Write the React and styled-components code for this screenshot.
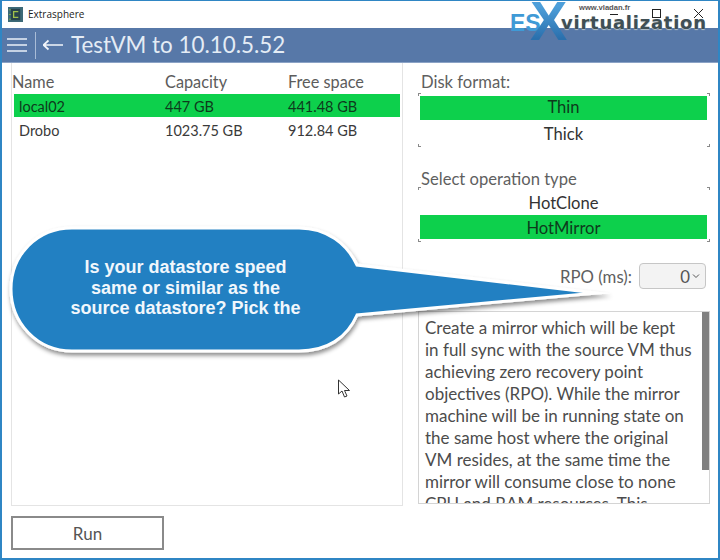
import React from 'react';
import styled, { createGlobalStyle } from 'styled-components';

const Global = createGlobalStyle`
  html, body { margin: 0; padding: 0; background: #fff; }
  * { box-sizing: border-box; }
`;

const Frame = styled.div`
  position: relative;
  width: 720px;
  height: 560px;
  overflow: hidden;
  background: #fff;
  border: 2px solid #2f86c4;
  border-top-width: 1px;
  display: flex;
  flex-direction: column;
  font-family: Lato, "Liberation Sans", sans-serif;
`;

const TitleBar = styled.div`
  height: 27px;
  flex: none;
  display: flex;
  align-items: center;
  gap: 5px;
  padding: 0 0 1px 6px;
  font: 10px "Open Sans", "Liberation Sans", sans-serif;
  color: #1c1c1c;
`;

const AppIcon = styled.svg`
  width: 15px;
  height: 15px;
  flex: none;
`;

const Header = styled.div`
  height: 35px;
  flex: none;
  background: #5778a8;
  border-bottom: 1px solid #8ba3c6;
  display: flex;
  align-items: center;
  color: #e4ecf5;
  padding-left: 5px;
`;

const Divider = styled.div`
  width: 1px;
  height: 27px;
  background: #a9bcd7;
  margin: 0 7px;
`;

const HeaderTitle = styled.div`
  font-size: 22.4px;
  line-height: 34px;
  margin-left: 7px;
  white-space: nowrap;
`;

const Content = styled.div`
  flex: none;
  height: 443px;
  display: grid;
  grid-template-columns: 392px 292px;
  column-gap: 15px;
  padding: 0 0 0 9px;
`;

const ListPanel = styled.div`
  border-left: 1px solid #e4e4e4;
  border-bottom: 1px solid #e4e4e4;
  border-right: 1px solid #e4e4e4;
  display: flex;
  flex-direction: column;
  height: 443px;
`;

const ListHead = styled.div`
  display: grid;
  grid-template-columns: 153px 123px 1fr;
  height: 31px;
  padding: 9px 0 0 0;
  font-size: 16.3px;
  line-height: 20px;
  color: #5c5c5c;
`;

const ListRow = styled.div`
  display: grid;
  grid-template-columns: 146px 123px 1fr;
  height: ${p => (p.$active ? 23 : 24)}px;
  margin: 0 2px 0 2px;
  padding: 2px 0 0 5px;
  align-items: center;
  font-size: 14.5px;
  color: ${p => (p.$active ? '#0d3a1c' : '#3a3a3a')};
  background: ${p => (p.$active ? '#0dd04c' : 'transparent')};
`;

const Side = styled.div`
  display: flex;
  flex-direction: column;
  height: 443px;
  position: relative;
`;

const Label = styled.div`
  font-size: 16.6px;
  line-height: 20px;
  color: #5f5f5f;
  padding-left: 3px;
  margin-top: ${p => p.$top || 0}px;
`;

const Group = styled.div`
  position: relative;
  margin-top: ${p => p.$top || 0}px;
  padding: 3px 3px 3px 2px;
  width: 292px;
  display: flex;
  flex-direction: column;
`;

const Corner = styled.i`
  position: absolute;
  width: 3px;
  height: 3px;
  border: 0 solid #8a8a8a;
  ${p => (p.$bottom ? 'bottom: 0; border-bottom-width: 1px;' : 'top: 0; border-top-width: 1px;')}
  ${p => (p.$right ? 'right: 0; border-right-width: 1px;' : 'left: 0; border-left-width: 1px;')}
`;

const Choice = styled.div`
  height: ${p => p.$h || 24}px;
  display: flex;
  align-items: center;
  justify-content: center;
  padding-top: ${p => p.$down || 0}px;
  padding-bottom: ${p => p.$up || 0}px;
  font-size: 16.6px;
  color: ${p => (p.$active ? '#0d3a1c' : '#333')};
  background: ${p => (p.$active ? '#0dd04c' : 'transparent')};
`;

const RpoRow = styled.div`
  display: flex;
  justify-content: flex-end;
  align-items: center;
  gap: 7px;
  height: 26px;
  margin-top: 21px;
  padding-right: 4px;
  font-size: 16.8px;
  color: #5f5f5f;
`;

const RpoSelect = styled.div`
  width: 67px;
  height: 26px;
  border: 1px solid #c6c6c6;
  border-radius: 4px;
  background: #f3f3f3;
  display: flex;
  align-items: center;
  justify-content: flex-end;
  gap: 2px;
  padding-right: 5px;
  font-size: 16.8px;
  color: #555;
`;

const DescBox = styled.div`
  position: relative;
  margin-top: 22px;
  width: 292px;
  height: 193px;
  border: 1px solid #d4d4d4;
  overflow: hidden;
  padding: 5px 0 0 6px;
  font-size: 17px;
  line-height: 22px;
  color: #4c4c4c;
`;

const Line = styled.div`
  white-space: nowrap;
`;

const Thumb = styled.div`
  position: absolute;
  right: 0;
  top: 0;
  width: 7px;
  height: 158px;
  background: #808080;
`;

const Footer = styled.div`
  flex: 1;
  padding: 10px 0 0 9px;
`;

const RunButton = styled.div`
  width: 153px;
  height: 34px;
  border: 2px solid #8a8a8a;
  display: flex;
  align-items: center;
  justify-content: center;
  font-size: 17px;
  color: #555;
`;

/* things lying over the window */
const Logo = styled.div`
  position: absolute;
  left: 506px;
  top: -1px;
  width: 208px;
  height: 42px;
  pointer-events: none;
`;
const LogoEs = styled.span`
  position: absolute;
  left: 2px;
  top: 10px;
  font: bold 23px/26px "Liberation Sans", sans-serif;
  color: #3f9ad6;
`;
const LogoX = styled.span`
  position: absolute;
  left: 22px;
  top: -4px;
  font: bold 56px/50px "Liberation Sans", sans-serif;
  background: linear-gradient(180deg, #4d9fda 20%, #2a70ad 85%);
  -webkit-background-clip: text;
  background-clip: text;
  color: transparent;
`;
const LogoWord = styled.span`
  position: absolute;
  left: 53px;
  top: 11px;
  font: bold 18px/24px "DejaVu Sans", sans-serif;
  letter-spacing: 0.75px;
  color: #3f4f55;
  text-shadow: 0 1px 1px #b8c4c8;
  white-space: nowrap;
`;
const LogoUrl = styled.span`
  position: absolute;
  left: 71px;
  top: 3px;
  font: bold 7.6px/10px "Liberation Sans", sans-serif;
  color: #555;
  white-space: nowrap;
`;

const Controls = styled.svg`
  position: absolute;
  left: 606px;
  top: 4px;
  width: 106px;
  height: 18px;
  pointer-events: none;
`;

const BubbleWrap = styled.div`
  position: absolute;
  left: 0;
  top: 217px;
  width: 620px;
  height: 150px;
`;
const BubbleSvg = styled.svg`
  position: absolute;
  inset: 0;
  width: 620px;
  height: 150px;
  overflow: visible;
`;
const BubbleText = styled.div`
  position: absolute;
  left: 21px;
  top: 39px;
  width: 325px;
  text-align: center;
  font: bold 18px/20.5px "Liberation Sans", sans-serif;
  color: #f1f7fc;
`;

const Pointer = styled.svg`
  position: absolute;
  left: 335px;
  top: 378px;
  width: 14px;
  height: 20px;
`;

const Burger = styled.svg`
  width: 21px;
  height: 16px;
  flex: none;
`;
const Back = styled.svg`
  width: 21px;
  height: 12px;
  flex: none;
`;
const Chevron = styled.svg`
  width: 8px;
  height: 6px;
  flex: none;
`;

const rows = [
  ['local02', '447 GB', '441.48 GB', true],
  ['Drobo', '1023.75 GB', '912.84 GB', false],
];

const desc = [
  'Create a mirror which will be kept',
  'in full sync with the source VM thus',
  'achieving zero recovery point',
  'objectives (RPO). While the mirror',
  'machine will be in running state on',
  'the same host where the original',
  'VM resides, at the same time the',
  'mirror will consume close to none',
  'CPU and RAM resources. This',
];

const Corners = () => (
  <>
    <Corner />
    <Corner $right />
    <Corner $bottom />
    <Corner $bottom $right />
  </>
);

export default function App() {
  return (
    <Frame>
      <Global />
      <TitleBar>
        <AppIcon viewBox="0 0 16 16">
          <rect width="16" height="16" fill="#3d6a78" />
          <rect x="3" y="2" width="10" height="12" fill="#27424c" />
          <path d="M11 5H6v6h5" fill="none" stroke="#9fc04a" strokeWidth="1.4" />
          <path d="M1 3h2M1 8h2M1 13h2" stroke="#88b04a" strokeWidth="1" />
        </AppIcon>
        Extrasphere
      </TitleBar>
      <Header>
        <Burger viewBox="0 0 21 16">
          <path d="M0 2h20M0 8h20M0 14h20" stroke="#eaf0f7" strokeWidth="1.7" />
        </Burger>
        <Divider />
        <Back viewBox="0 0 21 12">
          <path d="M20 6H.5M5.5 1.5.5 6l5 4.5" fill="none" stroke="#f2f5fa" strokeWidth="1.7" />
        </Back>
        <HeaderTitle>TestVM to 10.10.5.52</HeaderTitle>
      </Header>
      <Content>
        <ListPanel>
          <ListHead>
            <span>Name</span>
            <span>Capacity</span>
            <span>Free space</span>
          </ListHead>
          {rows.map(([n, c, f, a]) => (
            <ListRow key={n} $active={a}>
              <span>{n}</span>
              <span>{c}</span>
              <span>{f}</span>
            </ListRow>
          ))}
        </ListPanel>
        <Side>
          <Label $top={9}>Disk format:</Label>
          <Group $top={1}>
            <Corners />
            <Choice $active $up={2}>Thin</Choice>
            <Choice $down={3}>Thick</Choice>
          </Group>
          <Label $top={22}>Select operation type</Label>
          <Group $top={-2}>
            <Corners />
            <Choice $h={25}>HotClone</Choice>
            <Choice $active $h={24} $down={1}>HotMirror</Choice>
          </Group>
          <RpoRow>
            RPO (ms):
            <RpoSelect>
              0
              <Chevron viewBox="0 0 8 6">
                <path d="M1 1.5 4 4.5 7 1.5" fill="none" stroke="#555" strokeWidth="1" />
              </Chevron>
            </RpoSelect>
          </RpoRow>
          <DescBox>
            {desc.map(l => <Line key={l}>{l}</Line>)}
            <Thumb />
          </DescBox>
        </Side>
      </Content>
      <Footer>
        <RunButton>Run</RunButton>
      </Footer>

      <Controls viewBox="0 0 106 18">
        <path d="M2 9.5h8" stroke="#222" strokeWidth="1" />
        <rect x="44.5" y="4.5" width="8" height="8" fill="none" stroke="#222" />
        <path d="M86 4l9 9M95 4l-9 9" stroke="#222" strokeWidth="1" />
      </Controls>
      <Logo>
        <LogoEs>ES</LogoEs>
        <LogoWord>virtualization</LogoWord>
        <LogoX>X</LogoX>
        <LogoUrl>www.vladan.fr</LogoUrl>
      </Logo>

      <BubbleWrap>
        <BubbleSvg viewBox="0 0 620 150">
          <defs>
            <filter id="bs" x="-5%" y="-10%" width="110%" height="130%">
              <feDropShadow dx="1" dy="3" stdDeviation="2" floodColor="#000" floodOpacity="0.45" />
            </filter>
          </defs>
          <path
            d="M70 10H297C325 10 345 26 355 47L594 75 355 97C345 120 325 133 297 133H70C35 133 9 105 9 71S35 10 70 10Z"
            fill="#2280c2"
            stroke="#fff"
            strokeWidth="3"
            strokeMiterlimit="20"
            filter="url(#bs)"
          />
        </BubbleSvg>
        <BubbleText>
          Is your datastore speed<br />
          same or similar as the<br />
          source datastore? Pick the
        </BubbleText>
      </BubbleWrap>

      <Pointer viewBox="0 0 14 20">
        <path d="M1.5 1v14l3.5-3 2.5 6 2.5-1-2.5-5.5h5Z" fill="#fff" stroke="#333" strokeWidth="1" />
      </Pointer>
    </Frame>
  );
}
